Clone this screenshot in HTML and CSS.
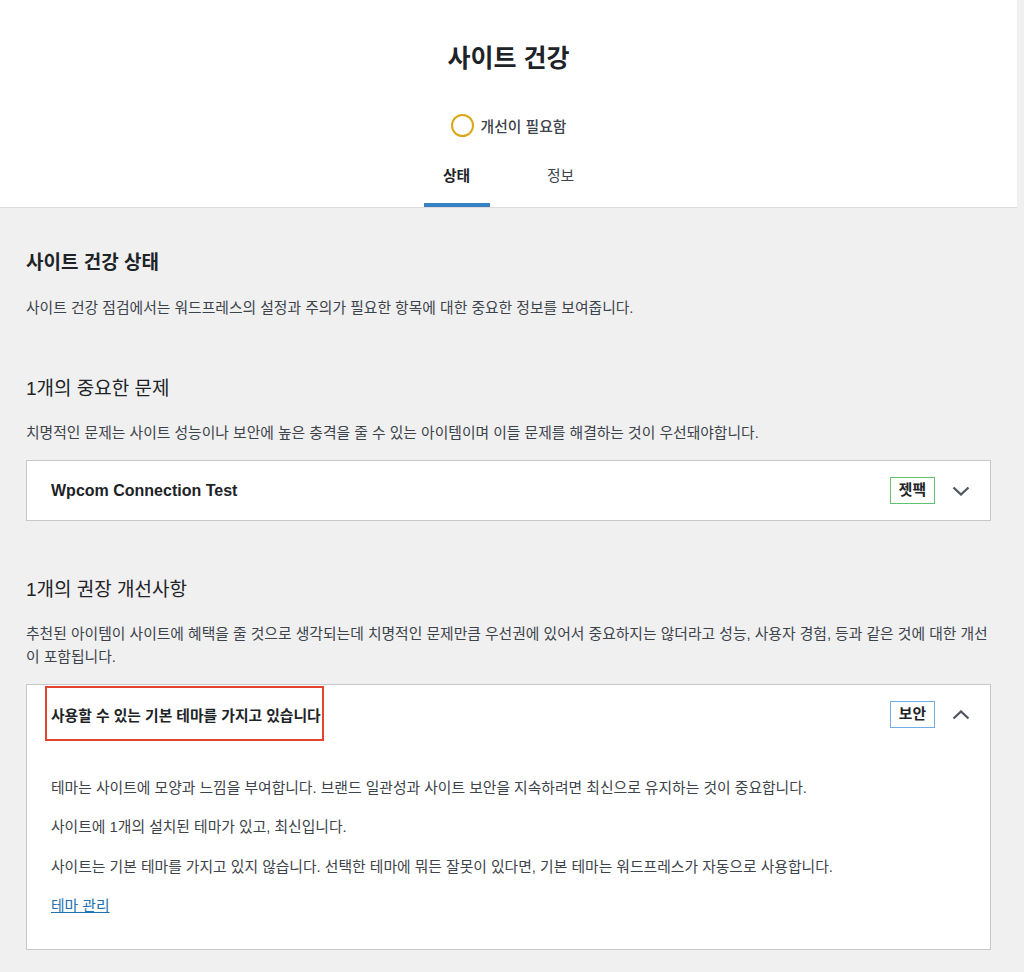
FILE: index.html
```html
<!DOCTYPE html>
<html lang="ko">
<head>
<meta charset="utf-8">
<title>사이트 건강</title>
<link rel="stylesheet" href="styles.css">
</head>
<body>
<div class="page">
  <header class="hc-header">
    <h1 class="hc-title">사이트 건강</h1>
    <div class="hc-status">
      <span class="hc-ring"></span>
      <span class="hc-status-text">개선이 필요함</span>
    </div>
    <nav class="hc-tabs">
      <a class="hc-tab active">상태</a>
      <a class="hc-tab">정보</a>
    </nav>
  </header>

  <main class="hc-body">
    <h2 class="hc-h2">사이트 건강 상태</h2>
    <p class="hc-desc">사이트 건강 점검에서는 워드프레스의 설정과 주의가 필요한 항목에 대한 중요한 정보를 보여줍니다.</p>

    <h3 class="hc-h3">1개의 중요한 문제</h3>
    <p class="hc-desc">치명적인 문제는 사이트 성능이나 보안에 높은 충격을 줄 수 있는 아이템이며 이들 문제를 해결하는 것이 우선돼야합니다.</p>

    <div class="acc">
      <div class="acc-head">
        <span class="acc-title latin">Wpcom Connection Test</span>
        <span class="badge green">젯팩</span>
        <svg class="chev" width="18" height="10" viewBox="0 0 18 10"><polyline points="1.5,1.5 9,8.5 16.5,1.5" fill="none" stroke="#50575e" stroke-width="2.3"/></svg>
      </div>
    </div>

    <h3 class="hc-h3">1개의 권장 개선사항</h3>
    <p class="hc-desc">추천된 아이템이 사이트에 혜택을 줄 것으로 생각되는데 치명적인 문제만큼 우선권에 있어서 중요하지는 않더라고 성능, 사용자 경험, 등과 같은 것에 대한 개선이 포함됩니다.</p>

    <div class="acc">
      <div class="acc-head">
        <span class="acc-title">사용할 수 있는 기본 테마를 가지고 있습니다</span>
        <span class="highlight"></span>
        <span class="badge blue">보안</span>
        <svg class="chev" width="18" height="10" viewBox="0 0 18 10"><polyline points="1.5,8.5 9,1.5 16.5,8.5" fill="none" stroke="#50575e" stroke-width="2.3"/></svg>
      </div>
      <div class="acc-panel">
        <p>테마는 사이트에 모양과 느낌을 부여합니다. 브랜드 일관성과 사이트 보안을 지속하려면 최신으로 유지하는 것이 중요합니다.</p>
        <p>사이트에 1개의 설치된 테마가 있고, 최신입니다.</p>
        <p>사이트는 기본 테마를 가지고 있지 않습니다. 선택한 테마에 뭐든 잘못이 있다면, 기본 테마는 워드프레스가 자동으로 사용합니다.</p>
        <p><a class="link" href="#">테마 관리</a></p>
      </div>
    </div>
  </main>
</div>
</body>
</html>
```

FILE: styles.css
```css
* { box-sizing: border-box; }
html, body { margin: 0; padding: 0; }
body {
  background: #f0f0f1;
  font-family: "Liberation Sans", "Noto Sans CJK KR", sans-serif;
  color: #3c434a;
  font-size: 14.8px;
}
.page { width: 1017px; }

.hc-header {
  background: #fff;
  border-bottom: 1px solid #dcdcde;
  height: 208px;
  display: flex;
  flex-direction: column;
  align-items: center;
}
.hc-title {
  margin: 40px 0 0;
  font-size: 25px;
  line-height: 36px;
  font-weight: 700;
  color: #1d2327;
}
.hc-status {
  margin-top: 37px;
  display: flex;
  align-items: center;
  gap: 7px;
  height: 24px;
}
.hc-ring {
  width: 23px;
  height: 23px;
  border: 2.5px solid #dba617;
  border-radius: 50%;
}
.hc-status-text {
  font-size: 14.8px;
  font-weight: 500;
  color: #3c434a;
}
.hc-tabs {
  margin-top: auto;
  display: flex;
  gap: 38px;
}
.hc-tab {
  width: 66px;
  text-align: center;
  font-size: 14.8px;
  line-height: 20px;
  padding-bottom: 17px;
  color: #3c434a;
  border-bottom: 4px solid transparent;
}
.hc-tab.active {
  font-weight: 700;
  color: #1d2327;
  border-bottom-color: #3582c4;
}

.hc-body {
  padding: 42px 26px 40px;
}
.hc-h2 {
  margin: 0;
  font-size: 19px;
  line-height: 26px;
  font-weight: 700;
  color: #1d2327;
}
.hc-h3 {
  margin: 56px 0 0;
  font-size: 19px;
  line-height: 26px;
  font-weight: 400;
  color: #1d2327;
}
.hc-desc {
  margin: 21px 0 0;
  font-size: 14.8px;
  line-height: 23px;
  color: #3c434a;
}
.hc-h3 + .hc-desc { margin-top: 20px; }

.acc {
  margin-top: 15px;
  background: #fff;
  border: 1px solid #c8c8cb;
}
.acc-head {
  position: relative;
  height: 59px;
  display: flex;
  align-items: center;
  padding: 0 20px 0 24px;
}
.acc-title {
  flex: 1;
  font-size: 14.8px;
  font-weight: 700;
  color: #1d2327;
}
.acc-title.latin { font-size: 16px; }
.badge {
  font-size: 14.8px;
  font-weight: 700;
  line-height: 21px;
  padding: 2px 8px;
  color: #1d2327;
  border: 1px solid;
}
.badge.green { border-color: #5fc46f; }
.badge.blue { border-color: #72aee6; }
.chev {
  margin-left: 17px;
  display: block;
}
.highlight {
  position: absolute;
  left: 18px;
  top: 1px;
  width: 279px;
  height: 55px;
  border: 2px solid #e3432f;
}
.acc-panel {
  padding: 33px 24px 31px;
}
.acc-panel p {
  margin: 0 0 16.3px;
  font-size: 14.8px;
  line-height: 23px;
  color: #3c434a;
}
.acc-panel p:last-child { margin-bottom: 0; }
.link {
  color: #2271b1;
  text-decoration: underline;
}
```
